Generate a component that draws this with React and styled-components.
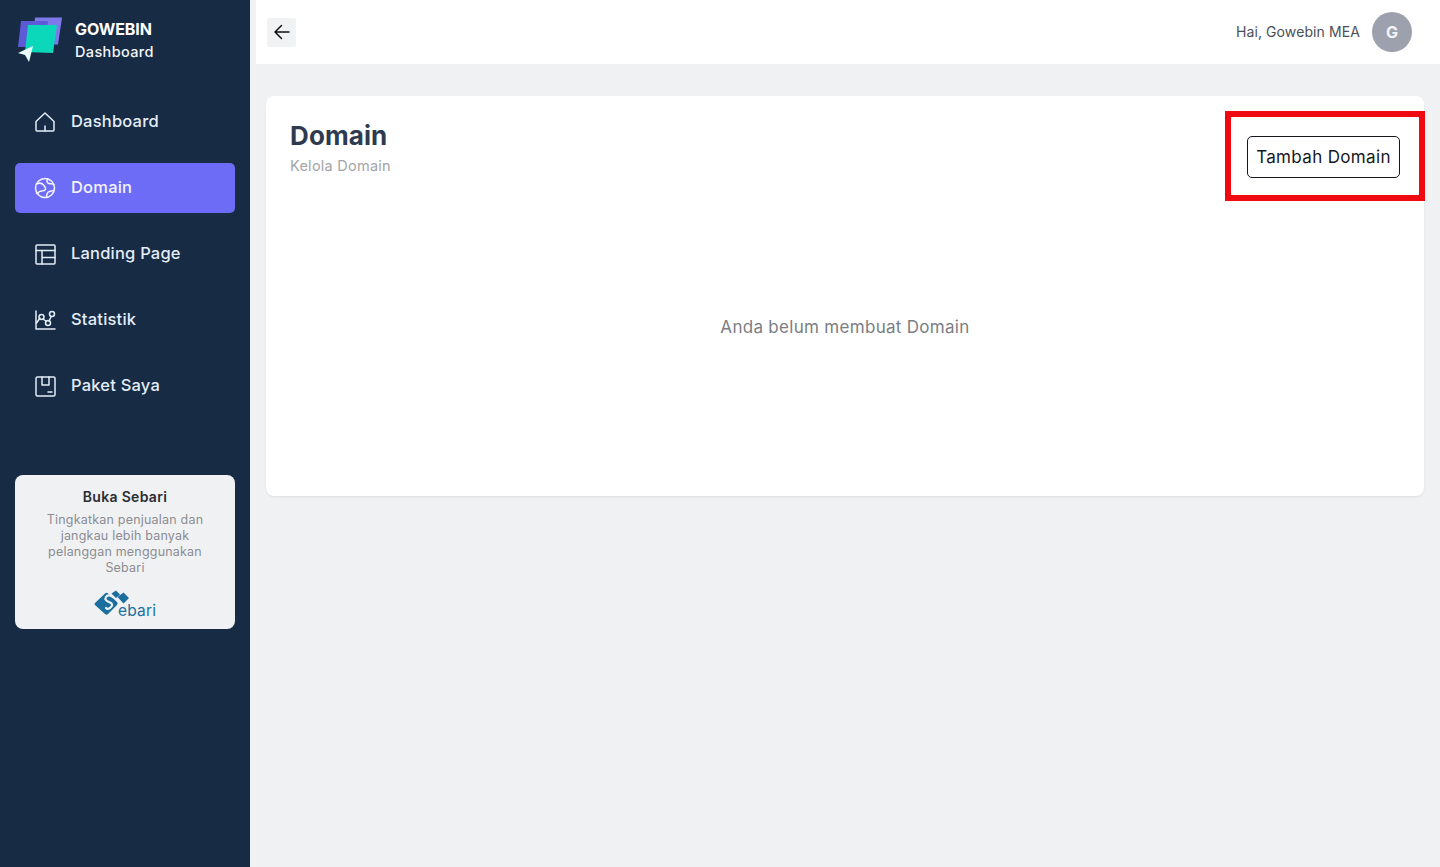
import React from "react";
import styled, { createGlobalStyle } from "styled-components";

const Global = createGlobalStyle`
  html, body { margin: 0; padding: 0; height: 100%; }
  body { background: #eff1f3; font-family: Inter, "Open Sans", "Liberation Sans", sans-serif; }
  * { box-sizing: border-box; }
`;
const Page = styled.div`
  display: flex; width: 100%; height: 867px; overflow: hidden; position: relative; background: #eff1f3;
`;
const Sidebar = styled.aside`
  width: 250px; flex: none; background: #172b45; display: flex; flex-direction: column; padding: 0 15px;
`;
const Brand = styled.div`
  height: 88px; display: flex; align-items: flex-start; gap: 12px; padding: 16px 0 0 2px;
`;
const BrandText = styled.div`
  display: flex; flex-direction: column; color: #fff; padding-top: 2px;
`;
const BrandName = styled.span`
  font-size: 16px; line-height: 23px; font-weight: 700; letter-spacing: -0.1px;
`;
const BrandSub = styled.span`
  font-size: 14.5px; line-height: 22px; font-weight: 500; letter-spacing: 0.35px; color: #f3f6fb;
`;
const Nav = styled.nav`
  display: flex; flex-direction: column; gap: 16px; margin-top: 9px;
`;
const NavItem = styled.a`
  height: 50px; display: flex; align-items: center; gap: 15px; padding-left: 19px; border-radius: 5px;
  color: ${p => (p.$active ? "#f4f3ff" : "#e3edf7")};
  background: ${p => (p.$active ? "#6c6cf7" : "transparent")};
  font-size: 16.5px; line-height: 48px; font-weight: 500; letter-spacing: 0.2px;
`;
const NavLabel = styled.span`
  display: block; height: 48px; margin-bottom: 2px;
`;
const NavIcon = styled.svg`
  width: 22px; height: 22px; flex: none; fill: none; stroke: currentColor; stroke-width: 1.5;
  stroke-linecap: round; stroke-linejoin: round;
`;
const Promo = styled.div`
  margin-top: 64px; height: 154px; border-radius: 8px; background: #f0f1f3; display: flex; flex-direction: column;
  align-items: center; padding-top: 13px; text-align: center;
`;
const PromoTitle = styled.div`
  font-size: 14px; line-height: 18px; font-weight: 600; color: #2a2d33; letter-spacing: 0.3px;
`;
const PromoText = styled.div`
  width: 180px; margin-top: 6px; font-size: 12.5px; line-height: 16px; color: #8b8d92; letter-spacing: 0.2px;
`;
const PromoLogo = styled.div`
  margin-top: 14px; width: 64px; height: 30px; position: relative; color: #1b6f9e;
`;
const PromoMark = styled.svg`
  width: 64px; height: 30px; display: block;
`;
const PromoWord = styled.span`
  position: absolute; left: 25px; top: 11px; font-size: 15.5px; line-height: 20px; letter-spacing: 0.2px;
`;
const Main = styled.div`
  flex: 1; display: flex; flex-direction: column; padding-left: 6px; min-width: 0;
`;
const Header = styled.header`
  height: 64px; flex: none; background: #fff; display: flex; align-items: center; justify-content: space-between;
  padding: 0 28px 0 11px;
`;
const BackButton = styled.button`
  width: 29px; height: 29px; border: 0; padding: 0; background: #f1f2f3; display: flex; align-items: center;
  justify-content: center; color: #111; border-radius: 2px;
`;
const UserBox = styled.div`
  display: flex; align-items: center; gap: 12px;
`;
const UserName = styled.span`
  font-size: 14px; line-height: 39px; height: 40px; color: #4b4f56; letter-spacing: 0.1px;
`;
const Avatar = styled.div`
  width: 40px; height: 40px; border-radius: 50%; background: #9ca1ad; color: #f4f5f7; display: flex; align-items: center;
  justify-content: center; font-size: 16px; font-weight: 700;
`;
const Content = styled.main`
  padding: 32px 16px 0 10px;
`;
const Card = styled.section`
  height: 400px; background: #fff; border-radius: 8px; box-shadow: 0 1px 2px rgba(0,0,0,.08); padding: 24px 24px 0;
  display: flex; flex-direction: column;
`;
const CardTop = styled.div`
  display: flex; justify-content: space-between; align-items: flex-start;
`;
const Title = styled.h1`
  margin: 0; font-size: 26px; line-height: 32px; font-weight: 700; color: #2d3a4f; letter-spacing: 0.1px;
`;
const Subtitle = styled.p`
  margin: 4px 0 0; font-size: 14.5px; line-height: 20px; color: #a3a5a9; letter-spacing: 0.25px;
`;
const AddButton = styled.button`
  margin-top: 16px; width: 153px; height: 42px; border: 1px solid #15171c; border-radius: 5px; background: #fff;
  color: #16181d; font: inherit; font-size: 17px; line-height: 38px; letter-spacing: 0.35px; padding: 0 0 1px;
`;
const Empty = styled.div`
  margin-top: 137px; text-align: center; font-size: 17px; line-height: 24px; color: #7b7e83; letter-spacing: 0.3px;
`;
const Highlight = styled.div`
  position: absolute; left: 1225px; top: 111px; width: 200px; height: 90px; border: 6px solid #ee0a10; pointer-events: none;
`;

const Logo = () => (
  <svg width="46" height="48" viewBox="0 0 46 48" style={{ flex: "none" }}>
    <path d="M18 1.500h27l-4 27H15z" fill="#7f78ea" />
    <path d="M4 5h27l-3 26H1z" fill="#5c5ad6" />
    <path d="M11 9h29l-4 28-28-1z" fill="#0bd8bb" />
    <path d="M16 30 1 37l7 2 4 7z" fill="#e9fffa" />
  </svg>
);

const Icons = {
  home: <><path d="M2 10.500 11 2l9 8.500V19a1 1 0 0 1-1 1H3a1 1 0 0 1-1-1z" /><path d="M11 20v-5" /></>,
  globe: <><circle cx="11" cy="11" r="9.500" /><path d="M2.500 7c3-1.500 6-.5 7.500 1.500s2.500 3 1 4.500-4 .5-5.500 1.500-2 3-3 1.500" /><path d="M13.500 1.800c-1 2.200-.5 4 1.500 4.700s3.500-.3 5 1.500" /><path d="M12.500 20.300c0-3 .5-5 3-5.800s3-.5 4.500-1.500" /></>,
  layout: <><rect x="2" y="2" width="19" height="19" rx="1" /><path d="M2 7.500h19M8 7.500V21M8 14.500h13" /></>,
  chart: <><path d="M2 2v18h19" /><path d="M2.500 14 6 9M9 10l3.500 2.500M15 12l2-4" /><circle cx="7.500" cy="8" r="2.500" /><circle cx="14" cy="14" r="2.500" /><circle cx="18" cy="5" r="2.500" /></>,
  box: <><rect x="2" y="2" width="19" height="19" rx="1.500" /><path d="M8 2v8h7V2M14 17h4" /></>,
};

const items = [
  ["home", "Dashboard"],
  ["globe", "Domain", true],
  ["layout", "Landing Page"],
  ["chart", "Statistik"],
  ["box", "Paket Saya"],
];

export default function App() {
  return (
    <Page>
      <Global />
      <Sidebar>
        <Brand>
          <Logo />
          <BrandText>
            <BrandName>GOWEBIN</BrandName>
            <BrandSub>Dashboard</BrandSub>
          </BrandText>
        </Brand>
        <Nav>
          {items.map(([icon, label, active]) => (
            <NavItem key={label} $active={active}>
              <NavIcon viewBox="0 0 22 22">{Icons[icon]}</NavIcon>
              <NavLabel>{label}</NavLabel>
            </NavItem>
          ))}
        </Nav>
        <Promo>
          <PromoTitle>Buka Sebari</PromoTitle>
          <PromoText>Tingkatkan penjualan dan jangkau lebih banyak pelanggan menggunakan Sebari</PromoText>
          <PromoLogo>
            <PromoMark viewBox="0 0 64 30">
              <path d="M2 13 12 3.500q1.500-1.500 3 0L24 12q1.500 1.500 0 3L15 24q-1.500 1.500-3 0L2 15q-1-1 0-2z" fill="currentColor" />
              <path d="M20 7q-5-3-7 0t3 5 2 5-5 1" fill="none" stroke="#f0f1f3" strokeWidth="2.200" strokeLinecap="round" />
              <path d="M18.500 3.500 23 .5l4 4-4 3.500zM24.500 7 30.500 2.500l5.500 5.500-5.500 5.500z" fill="currentColor" />
            </PromoMark>
            <PromoWord>ebari</PromoWord>
          </PromoLogo>
        </Promo>
      </Sidebar>
      <Main>
        <Header>
          <BackButton aria-label="Kembali">
            <svg width="18" height="18" viewBox="0 0 18 18" fill="none" stroke="currentColor" strokeWidth="1.500" strokeLinecap="round" strokeLinejoin="round">
              <path d="M16 9H2.500M8.500 2.500 2 9l6.500 6.500" />
            </svg>
          </BackButton>
          <UserBox>
            <UserName>Hai, Gowebin MEA</UserName>
            <Avatar>G</Avatar>
          </UserBox>
        </Header>
        <Content>
          <Card>
            <CardTop>
              <div>
                <Title>Domain</Title>
                <Subtitle>Kelola Domain</Subtitle>
              </div>
              <AddButton>Tambah Domain</AddButton>
            </CardTop>
            <Empty>Anda belum membuat Domain</Empty>
          </Card>
        </Content>
      </Main>
      <Highlight />
    </Page>
  );
}
